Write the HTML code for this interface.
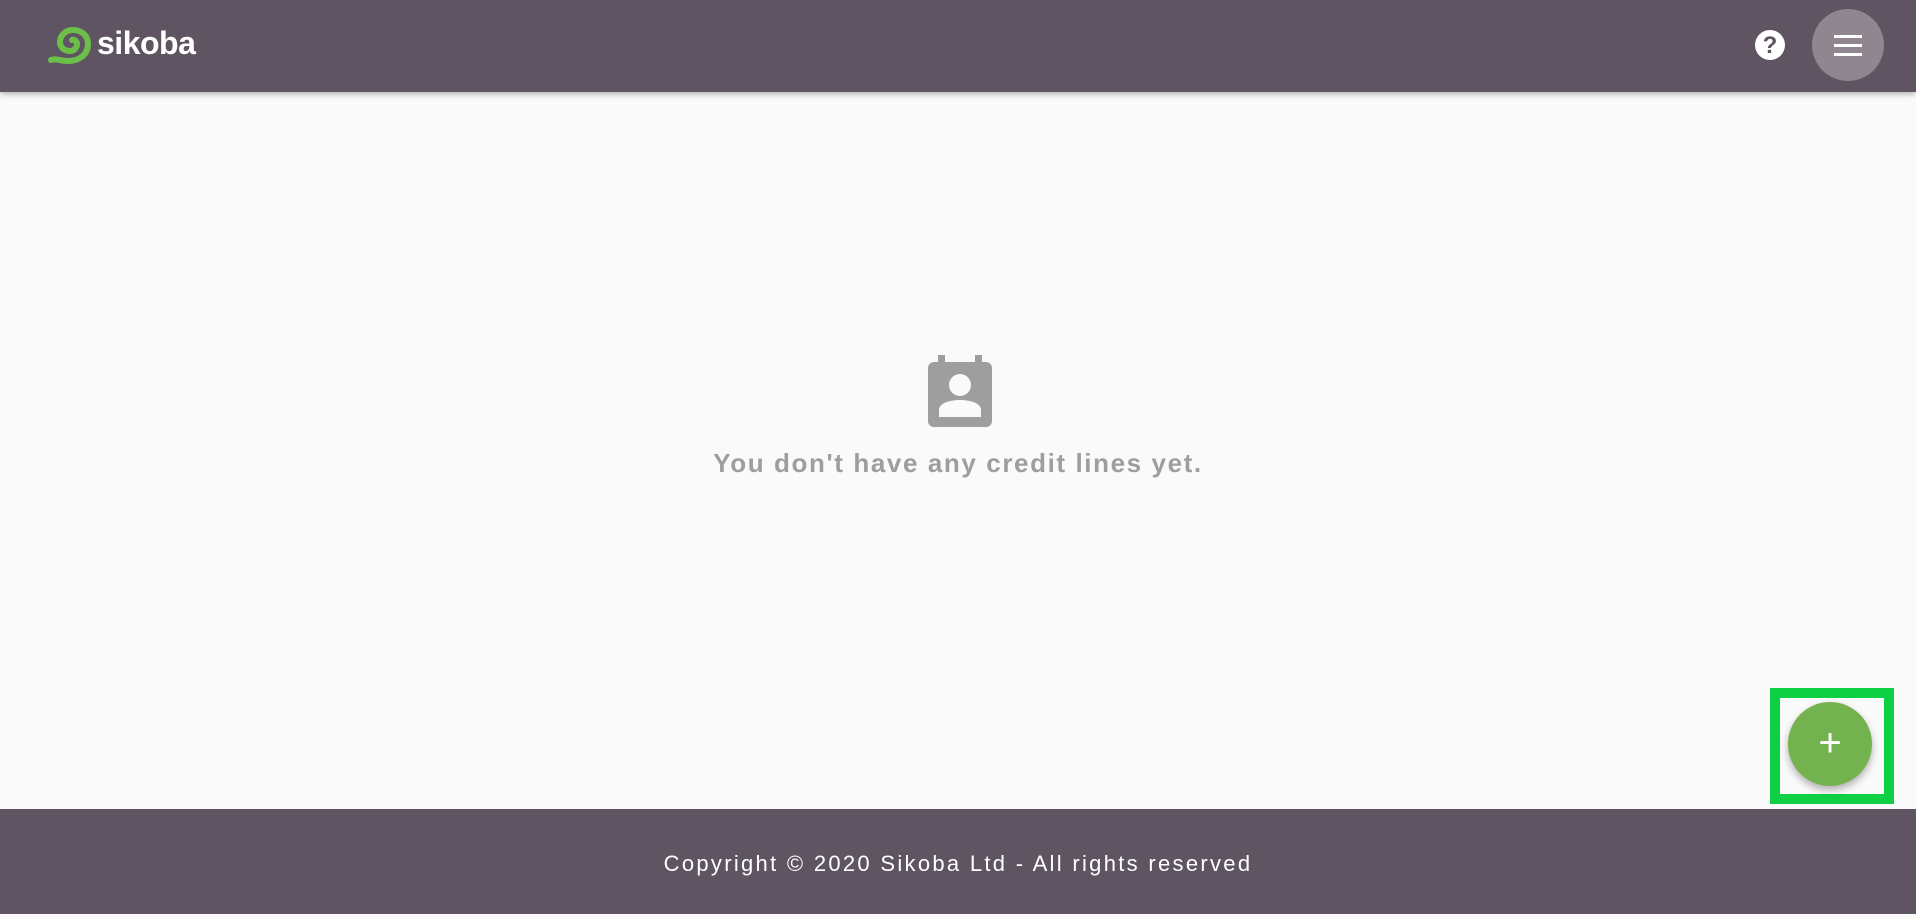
<!DOCTYPE html>
<html><head><meta charset="utf-8"><style>
*{margin:0;padding:0;box-sizing:border-box}
body{width:1916px;height:914px;background:#fafafa;font-family:"Liberation Sans",sans-serif;position:relative;overflow:hidden}
.hdr{position:absolute;left:0;top:0;width:1916px;height:92px;background:#5f5462;box-shadow:0 2px 6px rgba(0,0,0,.3)}
.logo{position:absolute;left:97px;top:25px;color:#fff;font-weight:bold;font-size:32px;letter-spacing:-0.5px}
.menu{position:absolute;left:1812px;top:9px;width:72px;height:72px;border-radius:50%;background:#8f8690}
.menu i{position:absolute;left:22px;width:28px;height:3px;background:#fff}
.help{position:absolute;left:1755px;top:30px;width:30px;height:30px;border-radius:50%;background:#fff;color:#5f5462;font-weight:bold;font-size:24px;text-align:center;line-height:31px}
.msg{position:absolute;left:0;width:1916px;top:448px;text-align:center;color:#9e9e9e;font-weight:bold;font-size:26px;letter-spacing:1.6px}
.ftr{position:absolute;left:0;top:809px;width:1916px;height:105px;background:#5f5462;color:#fff;font-size:22px;text-align:center;line-height:110px;letter-spacing:2.3px}
.box{position:absolute;left:1770px;top:688px;width:124px;height:116px;border:10px solid #0fcf45}
.fab{position:absolute;left:1788px;top:702px;width:84px;height:84px;border-radius:50%;background:#74b14f;box-shadow:0 4px 8px rgba(0,0,0,.3);color:#fff;font-size:40px;text-align:center;line-height:82px}
</style></head><body>
<div class="hdr">
<svg style="position:absolute;left:48px;top:27px" width="44" height="38" viewBox="0 0 44 38"><path d="M3 33 C8 31 12 34 20 34 C32 34 40 27 40 17 C40 8 33 3 25 3 C17 3 12 9 12 15 C12 21 17 24 22 24 C27 24 29 20 29 17 C29 14 26 12 24 13" fill="none" stroke="#6cc04a" stroke-width="6" stroke-linecap="round"/></svg>
<div class="logo">sikoba</div>
<div class="help">?</div>
<div class="menu"><i style="top:26px"></i><i style="top:35px"></i><i style="top:44px"></i></div>
</div>
<svg style="position:absolute;left:928px;top:355px" width="64" height="72" viewBox="0 0 64 72"><rect x="0" y="7" width="64" height="65" rx="6" fill="#9e9e9e"/><rect x="10" y="0" width="7" height="10" fill="#9e9e9e"/><rect x="47" y="0" width="7" height="10" fill="#9e9e9e"/><circle cx="32" cy="30" r="11" fill="#fafafa"/><path d="M11 62 V55 C11 48 22 45 32 45 C42 45 53 48 53 55 V62 Z" fill="#fafafa"/></svg>
<div class="msg">You don't have any credit lines yet.</div>
<div class="box"></div>
<div class="fab">+</div>
<div class="ftr">Copyright © 2020 Sikoba Ltd - All rights reserved</div>
</body></html>
